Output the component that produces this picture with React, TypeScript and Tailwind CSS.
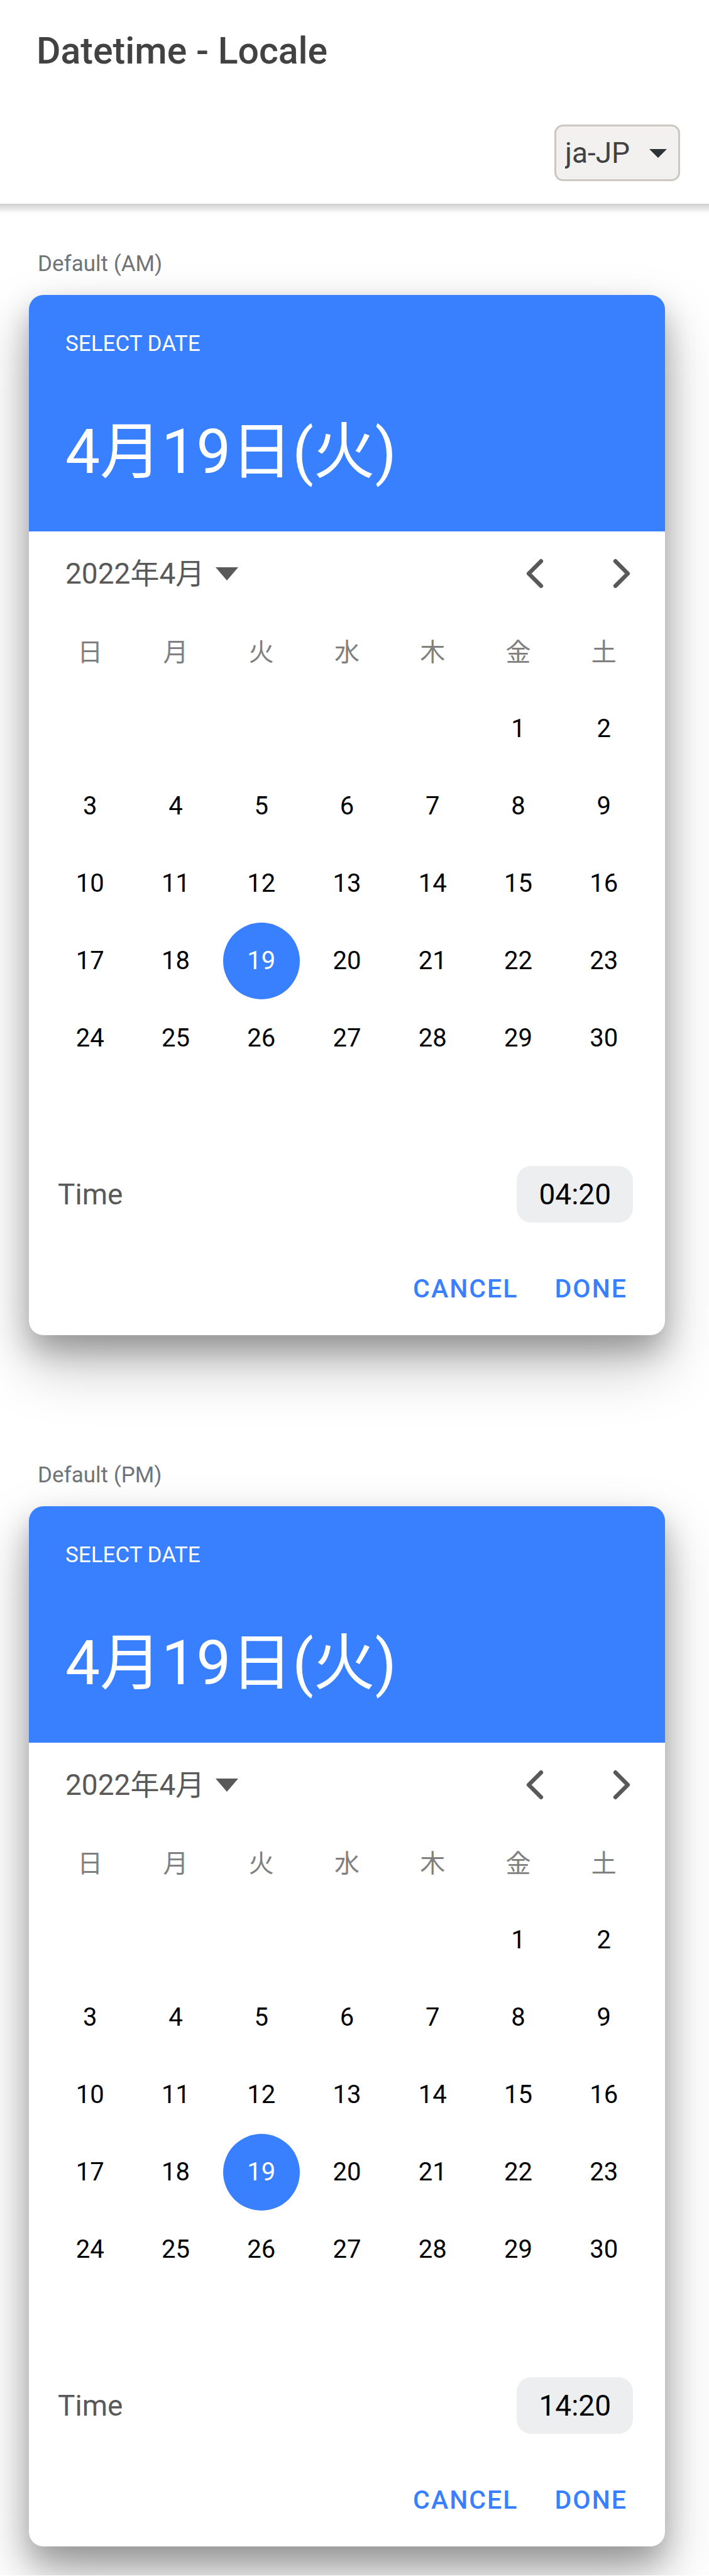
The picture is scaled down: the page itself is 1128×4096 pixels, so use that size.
import { useState } from 'react'

const WEEKDAYS = ['日', '月', '火', '水', '木', '金', '土']
const LEADING_BLANKS = 5
const DAYS = Array.from({ length: 30 }, (_, i) => i + 1)

function Chevron({ direction }: { direction: 'left' | 'right' }) {
  return (
    <svg viewBox="0 0 512 512" className="size-[70px]" fill="none" stroke="currentColor" strokeWidth="48" strokeLinecap="round" strokeLinejoin="round" aria-hidden="true">
      <path d={direction === 'left' ? 'M328 112L184 256l144 144' : 'M184 112l144 144-144 144'} />
    </svg>
  )
}

function DatetimeCard({ label, time }: { label: string; time: string }) {
  const [selected, setSelected] = useState(19)

  return (
    <section>
      <h2 className="pl-[14px] text-[35px] leading-10 text-[#6f7378]">{label}</h2>
      <div className="mt-[29px] overflow-hidden rounded-[23px] bg-white shadow-[0_46px_93px_rgba(0,0,0,0.25),0_23px_46px_rgba(0,0,0,0.25)]">
        <header className="bg-[#3880ff] px-[58px] pt-[58px] pb-[68px] text-white">
          <div className="text-[35px] leading-10">SELECT DATE</div>
          <div className="mt-[94px] text-[98px] leading-[116px]">4月19日(火)</div>
        </header>

        <div className="flex h-[134px] items-center justify-between pr-[34px] pl-[58px] text-[#595959]">
          <button type="button" className="flex items-center gap-[18px] text-[46px] leading-[56px]">
            2022年4月
            <svg viewBox="0 0 36 21" className="h-[21px] w-[36px]" fill="currentColor" aria-hidden="true">
              <path d="M0 0h36L18 21z" />
            </svg>
          </button>
          <div className="flex gap-[68px]">
            <button type="button" aria-label="Previous month">
              <Chevron direction="left" />
            </button>
            <button type="button" aria-label="Next month">
              <Chevron direction="right" />
            </button>
          </div>
        </div>

        <div className="grid h-[118px] grid-cols-7 items-center px-[29px] text-center text-[40px] leading-[48px] text-[#808080]">
          {WEEKDAYS.map((day) => (
            <div key={day}>{day}</div>
          ))}
        </div>

        <div className="grid grid-cols-7 grid-rows-[repeat(6,123px)] place-items-center px-[29px] text-[40px] leading-[48px]">
          {Array.from({ length: LEADING_BLANKS }, (_, i) => (
            <span key={`blank-${i}`} />
          ))}
          {DAYS.map((day) => (
            <button
              key={day}
              type="button"
              aria-pressed={day === selected}
              onClick={() => setSelected(day)}
              className={
                day === selected
                  ? 'size-[122px] rounded-full bg-[#3880ff] text-white'
                  : 'size-[122px] rounded-full text-black'
              }
            >
              {day}
            </button>
          ))}
        </div>

        <div className="flex items-center justify-between pt-[19px] pr-[51px] pl-[46px] text-[46px] leading-[56px]">
          <span className="text-[#595959]">Time</span>
          <button type="button" aria-label={`Time ${time}`} className="rounded-[23px] bg-[#edeef0] px-[35px] py-[17px] text-black">
            {time}
          </button>
        </div>

        <div className="mt-[79px] flex justify-end gap-[58px] pr-[60px] pb-[48px] text-[41px] leading-[52px] font-medium tracking-wider text-[#3880ff]">
          <button type="button">CANCEL</button>
          <button type="button">DONE</button>
        </div>
      </div>
    </section>
  )
}

export default function App() {
  return (
    <div className="overflow-hidden bg-white font-[Roboto,'Noto_Sans_CJK_JP',sans-serif]">
      <header>
        <div className="flex h-[162px] items-center px-[58px]">
          <h1 className="text-[59px] leading-[70px] font-medium text-[#424242]">Datetime - Locale</h1>
        </div>
        <div className="flex h-[162px] items-center justify-end pr-[46px]">
          <div className="relative">
            <select
              aria-label="Locale"
              defaultValue="ja-JP"
              className="h-[90px] w-[200px] appearance-none rounded-[14px] border-3 border-[#cdc7c2] bg-[#f3f1f0] pl-[14px] text-[46px] leading-[56px] text-[#424242]"
            >
              <option>en-US</option>
              <option>ja-JP</option>
              <option>es-ES</option>
            </select>
            <svg viewBox="0 0 28 14" className="pointer-events-none absolute top-[39px] right-[21px] h-[14px] w-[28px]" fill="#2e3436" aria-hidden="true">
              <path d="M0 0h28L14 14z" />
            </svg>
          </div>
        </div>
        <div className="h-[14px] bg-linear-to-b from-[#cfcfcf] to-[#fbfbfb]" />
      </header>

      <main className="flex flex-col gap-[203px] pt-[62px] pr-[70px] pb-[46px] pl-[46px]">
        <DatetimeCard label="Default (AM)" time="04:20" />
        <DatetimeCard label="Default (PM)" time="14:20" />
      </main>
    </div>
  )
}
